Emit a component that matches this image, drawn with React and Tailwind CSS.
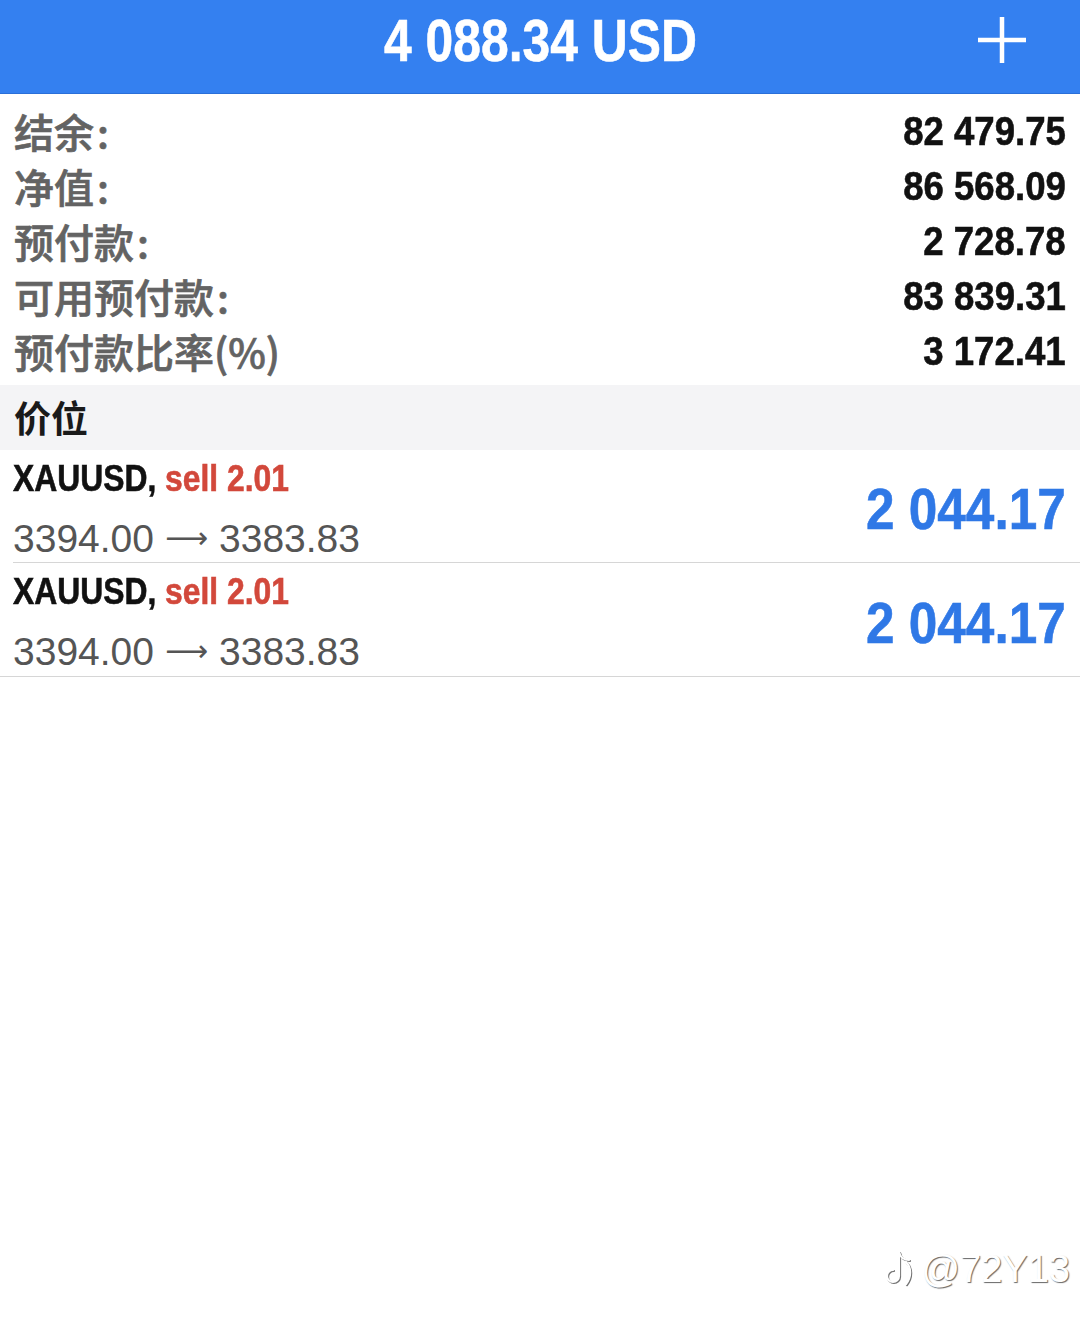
import React from 'react';

// Liberation Sans Bold squeezed horizontally stands in for the condensed face
const cond = "inline-block font-['Liberation_Sans',sans-serif] font-bold leading-none [-webkit-text-stroke:0.6px]";
const cjk = "font-['Noto_Sans_CJK_SC','Noto_Sans',sans-serif]";

const summary = [
    { label: '结余', colon: true, value: '82 479.75' },
    { label: '净值', colon: true, value: '86 568.09' },
    { label: '预付款', colon: true, value: '2 728.78' },
    { label: '可用预付款', colon: true, value: '83 839.31' },
    { label: '预付款比率(%)', colon: false, value: '3 172.41' },
];

const positions = [
    { symbol: 'XAUUSD', side: 'sell 2.01', open: '3394.00', current: '3383.83', profit: '2 044.17' },
    { symbol: 'XAUUSD', side: 'sell 2.01', open: '3394.00', current: '3383.83', profit: '2 044.17' },
];

const PositionRow = ({ pos, last }) => (
    <div className="pl-[13px]">
        <div className={`flex items-center justify-between h-[113px] pr-[14px] ${last ? '' : 'border-b border-[#d6d6d6]'}`}>
            <div className="flex flex-col self-start pt-[10px]">
                <div className="h-[40px] leading-[40px] whitespace-nowrap">
                    <span className={`${cond} leading-[40px] text-[37px] scale-x-[0.86] origin-left whitespace-nowrap`}>
                        <span className="text-[#111]">{pos.symbol}, </span>
                        <span className="text-[#d2483b]">{pos.side}</span>
                    </span>
                </div>
                <div className="mt-[18px] h-[40px] leading-[40px] font-['Liberation_Sans',sans-serif] text-[39px] text-[#555] whitespace-nowrap">
                    {pos.open}
                    <span className="font-['DejaVu_Sans',sans-serif] text-[30px] align-[4px] mx-[11px]">⟶</span>
                    {pos.current}
                </div>
            </div>
            <span className={`${cond} text-[58px] scale-x-[0.885] origin-right text-[#2f78e6] pt-[6px]`}>
                {pos.profit}
            </span>
        </div>
    </div>
);

const Watermark = () => (
    <div className="absolute right-[10px] bottom-[36px] flex items-center gap-[4px] select-none">
        <svg width="34" height="42" viewBox="0 0 34 42" fill="none" className="drop-shadow-[1px_1px_0.5px_rgba(0,0,0,0.55)]">
            <path d="M15 4v24a6 6 0 1 1-6-6" stroke="#fff" strokeWidth="2.2" strokeLinecap="round" />
            <path d="M15 4c1 5 5 8 10 8" stroke="#fff" strokeWidth="2.2" strokeLinecap="round" />
            <path d="M22 14c5 5 6 14 0 22" stroke="#fff" strokeWidth="2.2" strokeLinecap="round" />
        </svg>
        <span className="font-['Liberation_Sans',sans-serif] text-[38px] leading-none text-white [text-shadow:1px_1px_1px_rgba(0,0,0,0.6)]">
            @72Y13
        </span>
    </div>
);

export default function App() {
    return (
        <div className="relative w-[1080px] h-[1326px] bg-white overflow-hidden">
            {/* Header bar */}
            <div className="relative flex items-center justify-center h-[94px] bg-[#3480f0] border-b border-[#2a6fd8]">
                <span className={`${cond} text-[60px] text-white scale-x-[0.83] origin-center pb-[12px] whitespace-nowrap`}>
                    4 088.34 USD
                </span>
                <svg className="absolute right-[54px] top-[17px]" width="48" height="46" viewBox="0 0 48 46">
                    <path d="M24 0v46M0 23h48" stroke="#fff" strokeWidth="4.5" />
                </svg>
            </div>

            {/* Account summary */}
            <div className="pt-[9px] pb-[7px] px-[14px]">
                {summary.map((row) => (
                    <div key={row.label} className="flex items-center justify-between h-[55px]">
                        <span className={`${cjk} font-medium text-[40px] text-[#636363] [-webkit-text-stroke:0.7px]`}>
                            {row.label}
                            {row.colon && <span className="ml-[3px]">:</span>}
                        </span>
                        <span className={`${cond} text-[40px] scale-x-[0.915] origin-right text-[#111] whitespace-nowrap`}>{row.value}</span>
                    </div>
                ))}
            </div>

            {/* Section header */}
            <div className="flex items-center h-[65px] px-[14px] bg-[#f4f4f6]">
                <span className={`${cjk} font-bold text-[37px] text-[#1a1a1a]`}>价位</span>
            </div>

            {/* Open positions */}
            <div className="border-b border-[#d6d6d6]">
                {positions.map((pos, i) => (
                    <PositionRow key={i} pos={pos} last={i === positions.length - 1} />
                ))}
            </div>

            <Watermark />
        </div>
    );
}
